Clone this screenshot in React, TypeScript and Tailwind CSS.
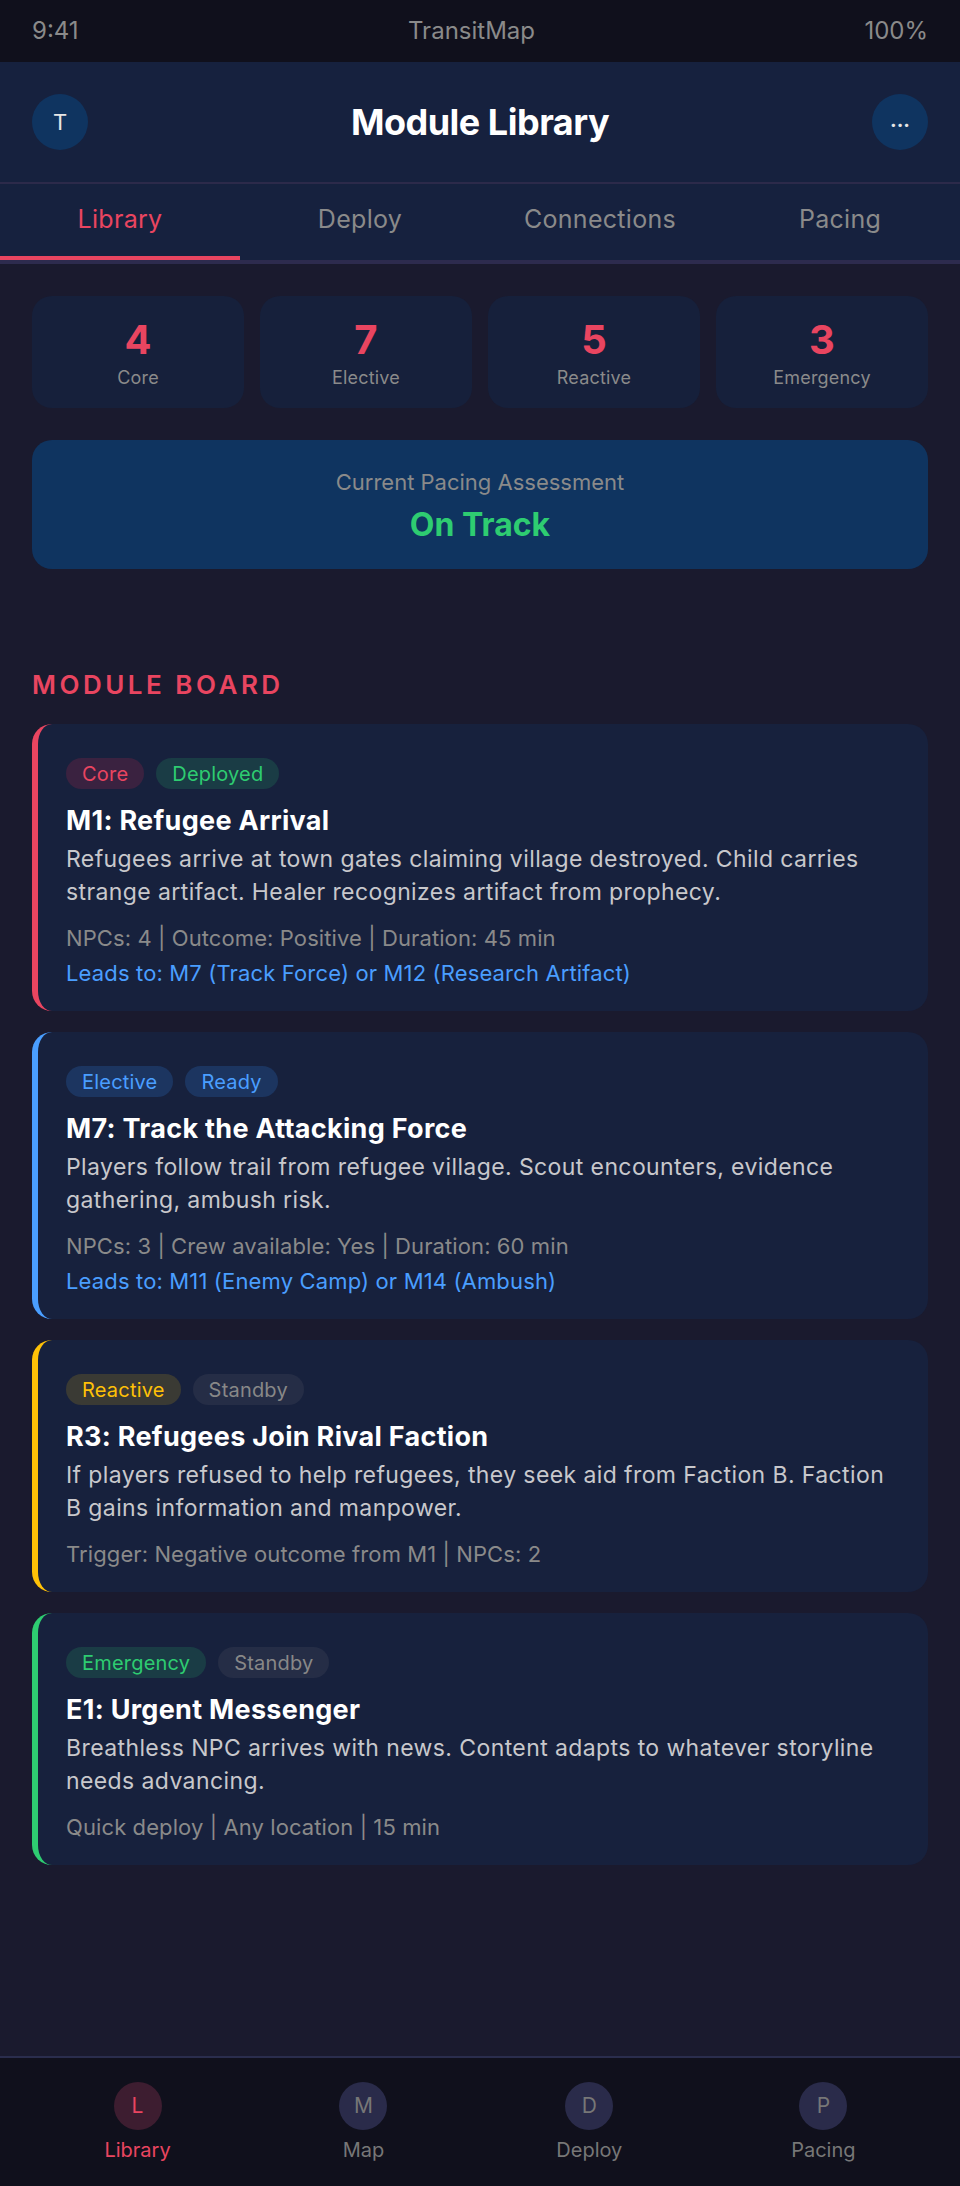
import React from "react";

type Tag = { label: string; cls: string };
type Mod = {
  border: string;
  tags: Tag[];
  title: string;
  desc: string;
  meta: string;
  leads?: string;
};

const mods: Mod[] = [
  {
    border: "border-[#e94560]",
    tags: [
      { label: "Core", cls: "bg-[#3a2240] text-[#e94560]" },
      { label: "Deployed", cls: "bg-[#1a3c45] text-[#2ecc71]" },
    ],
    title: "M1: Refugee Arrival",
    desc: "Refugees arrive at town gates claiming village destroyed. Child carries strange artifact. Healer recognizes artifact from prophecy.",
    meta: "NPCs: 4 | Outcome: Positive | Duration: 45 min",
    leads: "Leads to: M7 (Track Force) or M12 (Research Artifact)",
  },
  {
    border: "border-[#4a9eff]",
    tags: [
      { label: "Elective", cls: "bg-[#1c3560] text-[#4a9eff]" },
      { label: "Ready", cls: "bg-[#1c3560] text-[#4a9eff]" },
    ],
    title: "M7: Track the Attacking Force",
    desc: "Players follow trail from refugee village. Scout encounters, evidence gathering, ambush risk.",
    meta: "NPCs: 3 | Crew available: Yes | Duration: 60 min",
    leads: "Leads to: M11 (Enemy Camp) or M14 (Ambush)",
  },
  {
    border: "border-[#ffc107]",
    tags: [
      { label: "Reactive", cls: "bg-[#3a3a34] text-[#ffc107]" },
      { label: "Standby", cls: "bg-[#252d46] text-[#888888]" },
    ],
    title: "R3: Refugees Join Rival Faction",
    desc: "If players refused to help refugees, they seek aid from Faction B. Faction B gains information and manpower.",
    meta: "Trigger: Negative outcome from M1 | NPCs: 2",
  },
  {
    border: "border-[#2ecc71]",
    tags: [
      { label: "Emergency", cls: "bg-[#1a3c45] text-[#2ecc71]" },
      { label: "Standby", cls: "bg-[#252d46] text-[#888888]" },
    ],
    title: "E1: Urgent Messenger",
    desc: "Breathless NPC arrives with news. Content adapts to whatever storyline needs advancing.",
    meta: "Quick deploy | Any location | 15 min",
  },
];

const stats = [
  { n: "4", l: "Core" },
  { n: "7", l: "Elective" },
  { n: "5", l: "Reactive" },
  { n: "3", l: "Emergency" },
];

const navItems = [
  { c: "L", l: "Library", active: true },
  { c: "M", l: "Map" },
  { c: "D", l: "Deploy" },
  { c: "P", l: "Pacing" },
];

export default function App() {
  return (
    <div className="font-[family-name:Inter,sans-serif] bg-[#1a1a2e] w-[960px] h-[2186px] flex flex-col overflow-hidden">
      {/* status bar */}
      <div className="h-[62px] shrink-0 bg-[#10101c] flex items-center justify-between px-8 text-[24px] text-[#8a8a8a]">
        <span>9:41</span>
        <span>TransitMap</span>
        <span>100%</span>
      </div>

      {/* header */}
      <div className="h-[122px] shrink-0 bg-[#16213e] border-b-2 border-[#2c2a4a] flex items-center justify-between px-8">
        <div className="w-14 h-14 rounded-full bg-[#0f3460] flex items-center justify-center text-[22px] text-[#e6e6e6]">
          T
        </div>
        <h1 className="text-[36px] font-bold text-white tracking-[-0.5px]">Module Library</h1>
        <div className="w-14 h-14 rounded-full bg-[#0f3460] flex items-center justify-center text-[20px] text-[#e6e6e6] font-bold leading-none pb-1">
          ...
        </div>
      </div>

      {/* tabs */}
      <div className="shrink-0 bg-[#16213e] border-b-4 border-[#2d2b4e] grid grid-cols-4">
        {["Library", "Deploy", "Connections", "Pacing"].map((t, i) => (
          <div
            key={t}
            className={
              i === 0
                ? "h-[76px] flex items-center justify-center text-[25px] tracking-[0.3px] text-[#e94560] border-b-4 border-[#e94560]"
                : "h-[76px] flex items-center justify-center text-[25px] tracking-[0.3px] text-[#8a8a8a] border-b-4 border-transparent"
            }
          >
            {t}
          </div>
        ))}
      </div>

      {/* main */}
      <div className="flex-1 px-8 pt-8">
        <div className="grid grid-cols-4 gap-4">
          {stats.map((s) => (
            <div
              key={s.l}
              className="h-[112px] rounded-[20px] bg-[#16203b] flex flex-col items-center pt-[20px]"
            >
              <div className="text-[40px] leading-[48px] font-bold text-[#e94560]">{s.n}</div>
              <div className="text-[18px] leading-[27px] tracking-[0.2px] text-[#8a8a8a]">{s.l}</div>
            </div>
          ))}
        </div>

        <div className="mt-8 h-[129px] rounded-[20px] bg-[#0f3460] flex flex-col items-center pt-[27px]">
          <div className="text-[22px] leading-[31px] text-[#8a8a8a]">Current Pacing Assessment</div>
          <div className="mt-2 text-[32px] leading-[38px] font-bold text-[#2ecc71]">On Track</div>
        </div>

        <h2 className="mt-[99px] text-[26px] leading-[34px] font-semibold tracking-[3.5px] text-[#e94560]">
          MODULE BOARD
        </h2>

        <div className="mt-[22px] flex flex-col gap-[21px]">
          {mods.map((m) => (
            <div
              key={m.title}
              className={`rounded-[20px] bg-[#17213d] border-l-[6px] ${m.border} pl-[28px] pr-[28px] pt-[34px] pb-[20px]`}
            >
              <div className="flex gap-3">
                {m.tags.map((t) => (
                  <span
                    key={t.label}
                    className={`h-[31px] px-4 rounded-full flex items-center text-[20px] tracking-[0.2px] ${t.cls}`}
                  >
                    {t.label}
                  </span>
                ))}
              </div>
              <div className="mt-[14px] text-[27px] leading-[35px] font-bold tracking-[0.3px] text-white">
                {m.title}
              </div>
              <div className="mt-[5px] text-[23px] leading-[33px] tracking-[0.4px] text-[#c8c8cc]">{m.desc}</div>
              <div className="mt-[12px] text-[22px] leading-[35px] tracking-[0.1px] text-[#8a8a8a]">{m.meta}</div>
              {m.leads && (
                <div className="text-[22px] leading-[35px] tracking-[0.15px] text-[#4a9eff]">{m.leads}</div>
              )}
            </div>
          ))}
        </div>
      </div>

      {/* bottom nav */}
      <div className="h-[130px] shrink-0 bg-[#10101c] border-t-2 border-[#2a2d4d] flex justify-around px-5 pt-6">
        {navItems.map((n) => (
          <div key={n.l} className="flex flex-col items-center">
            <div
              className={
                n.active
                  ? "w-12 h-12 rounded-full bg-[#3d1d30] flex items-center justify-center text-[21px] text-[#e94560]"
                  : "w-12 h-12 rounded-full bg-[#2a2b4a] flex items-center justify-center text-[21px] text-[#777777]"
              }
            >
              {n.c}
            </div>
            <div
              className={
                n.active
                  ? "mt-[6px] text-[20px] leading-[28px] text-[#e94560]"
                  : "mt-[6px] text-[20px] leading-[28px] text-[#777777]"
              }
            >
              {n.l}
            </div>
          </div>
        ))}
      </div>
    </div>
  );
}
